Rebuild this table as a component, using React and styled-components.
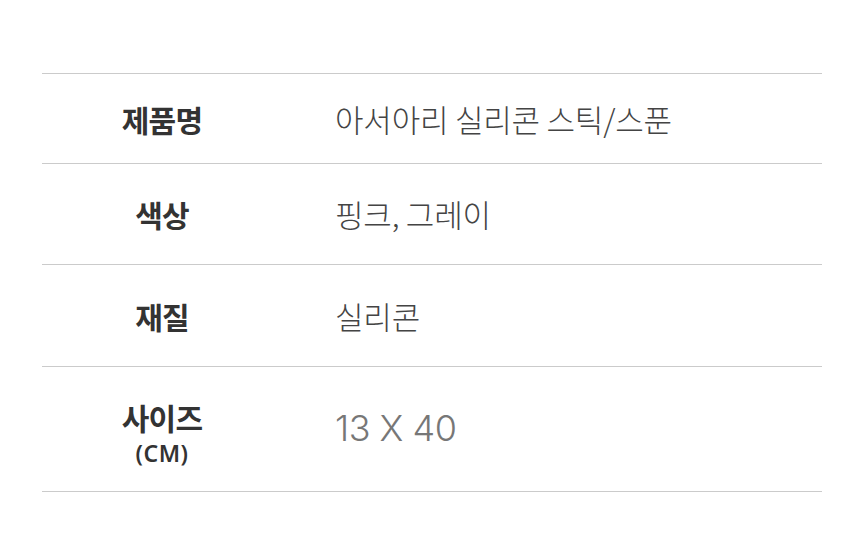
import React from "react";
import styled, { createGlobalStyle } from "styled-components";

const Global = createGlobalStyle`
  html, body { margin: 0; padding: 0; background: #fff; }
  body { font-family: "Noto Sans CJK KR", "Noto Sans", sans-serif; }
`;

const Page = styled.div`
  width: 860px;
  height: 554px;
  box-sizing: border-box;
  padding: 73px 38px 0 42px;
  background: #fff;
`;

const Table = styled.div`
  display: flex;
  flex-direction: column;
  border-bottom: 1px solid #cbcbcb;
`;

const Row = styled.div`
  display: grid;
  grid-template-columns: 240px 1fr;
  align-items: center;
  height: ${(p) => p.$h}px;
  box-sizing: border-box;
  border-top: 1px solid #cbcbcb;
`;

const Label = styled.div`
  display: flex;
  flex-direction: column;
  align-items: center;
  padding-top: ${(p) => (p.$sub ? 8 : 0)}px;
  font-family: "Noto Sans CJK KR", sans-serif;
  font-weight: 700;
  font-size: 30px;
  line-height: 32px;
  color: #333;
  letter-spacing: -0.8px;
`;

const Sub = styled.span`
  font-family: "Noto Sans", "Noto Sans CJK KR", sans-serif;
  font-weight: 600;
  font-size: 23px;
  line-height: 26px;
  margin-top: 7px;
  letter-spacing: 0.5px;
`;

const Value = styled.div`
  padding-left: 53px;
  font-family: ${(p) => (p.$num ? '"Inter", "Noto Sans", sans-serif' : '"Noto Sans CJK KR", sans-serif')};
  font-weight: 300;
  font-size: ${(p) => (p.$num ? 36 : 31)}px;
  color: ${(p) => (p.$num ? "#777" : "#444")};
  letter-spacing: ${(p) => (p.$num ? "-0.5px" : "-0.2px")};
  line-height: 1.2;
`;

const rows = [
  { h: 90, label: "제품명", value: "아서아리 실리콘 스틱/스푼" },
  { h: 101, label: "색상", value: "핑크, 그레이" },
  { h: 102, label: "재질", value: "실리콘" },
  { h: 125, label: "사이즈", sub: "(CM)", value: "13 X 40", num: true },
];

export default function App() {
  return (
    <Page>
      <Global />
      <Table>
        {rows.map((r) => (
          <Row key={r.label} $h={r.h}>
            <Label $sub={!!r.sub}>
              {r.label}
              {r.sub && <Sub>{r.sub}</Sub>}
            </Label>
            <Value $num={r.num}>{r.value}</Value>
          </Row>
        ))}
      </Table>
    </Page>
  );
}
